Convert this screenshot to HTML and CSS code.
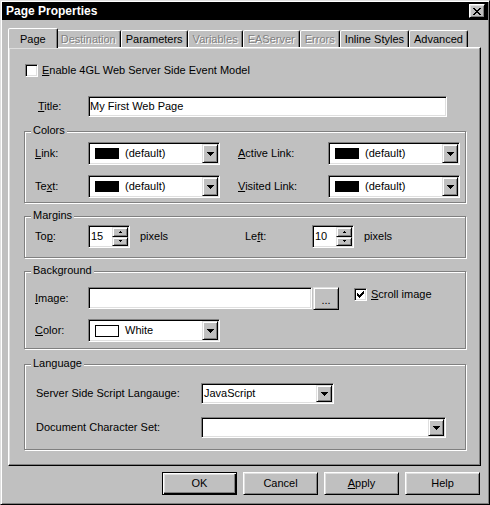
FILE: index.html
```html
<!DOCTYPE html>
<html>
<head>
<meta charset="utf-8">
<title>Page Properties</title>
<link rel="stylesheet" href="styles.css">
</head>
<body>
<div class="window">
  <div class="titlebar">
    <span class="title">Page Properties</span>
    <span class="close">
      <svg width="8" height="7" viewBox="0 0 8 7" shape-rendering="crispEdges"><path d="M0 0h2v1H0zM6 0h2v1H6zM1 1h2v1H1zM5 1h2v1H5zM2 2h4v1H2zM3 3h2v1H3zM2 4h4v1H2zM1 5h2v1H1zM5 5h2v1H5zM0 6h2v1H0zM6 6h2v1H6z" fill="#000"/></svg>
    </span>
  </div>
  <div class="body">
    <div class="tabs">
      <div class="tab sel">Page</div>
      <div class="tab dis">Destination</div>
      <div class="tab">Parameters</div>
      <div class="tab dis">Variables</div>
      <div class="tab dis">EAServer</div>
      <div class="tab dis">Errors</div>
      <div class="tab">Inline Styles</div>
      <div class="tab">Advanced</div>
    </div>
    <div class="panel">
      <div class="check-row">
        <span class="checkbox"></span>
        <span class="check-label"><u>E</u>nable 4GL Web Server Side Event Model</span>
      </div>
      <div class="title-row">
        <span class="lbl-title"><u>T</u>itle:</span>
        <div class="field title-field">My First Web Page</div>
      </div>

      <div class="group colors">
        <span class="legend">Colors</span>
        <div class="colors-grid">
          <span><u>L</u>ink:</span>
          <div class="combo c132"><div class="val"><span class="swatch"></span>(default)</div><span class="arrow"><svg width="7" height="4" viewBox="0 0 7 4" shape-rendering="crispEdges"><path d="M0 0h7v1H0zM1 1h5v1H1zM2 2h3v1H2zM3 3h1v1H3z"/></svg></span></div>
          <span><u>A</u>ctive Link:</span>
          <div class="combo c132"><div class="val"><span class="swatch"></span>(default)</div><span class="arrow"><svg width="7" height="4" viewBox="0 0 7 4" shape-rendering="crispEdges"><path d="M0 0h7v1H0zM1 1h5v1H1zM2 2h3v1H2zM3 3h1v1H3z"/></svg></span></div>
          <span>Te<u>x</u>t:</span>
          <div class="combo c132"><div class="val"><span class="swatch"></span>(default)</div><span class="arrow"><svg width="7" height="4" viewBox="0 0 7 4" shape-rendering="crispEdges"><path d="M0 0h7v1H0zM1 1h5v1H1zM2 2h3v1H2zM3 3h1v1H3z"/></svg></span></div>
          <span><u>V</u>isited Link:</span>
          <div class="combo c132"><div class="val"><span class="swatch"></span>(default)</div><span class="arrow"><svg width="7" height="4" viewBox="0 0 7 4" shape-rendering="crispEdges"><path d="M0 0h7v1H0zM1 1h5v1H1zM2 2h3v1H2zM3 3h1v1H3z"/></svg></span></div>
        </div>
      </div>

      <div class="group margins">
        <span class="legend">Margins</span>
        <div class="row">
          <span class="lbl53">To<u>p</u>:</span>
          <div class="spin"><span class="num">15</span><span class="spin-btns"><span class="sb"><svg width="3" height="2" viewBox="0 0 3 2" shape-rendering="crispEdges"><path d="M1 0h1v1H1zM0 1h3v1H0z"/></svg></span><span class="sb"><svg width="3" height="2" viewBox="0 0 3 2" shape-rendering="crispEdges"><path d="M0 0h3v1H0zM1 1h1v1H1z"/></svg></span></span></div>
          <span class="pixels first">pixels</span>
          <span class="lbl67">Le<u>f</u>t:</span>
          <div class="spin"><span class="num">10</span><span class="spin-btns"><span class="sb"><svg width="3" height="2" viewBox="0 0 3 2" shape-rendering="crispEdges"><path d="M1 0h1v1H1zM0 1h3v1H0z"/></svg></span><span class="sb"><svg width="3" height="2" viewBox="0 0 3 2" shape-rendering="crispEdges"><path d="M0 0h3v1H0zM1 1h1v1H1z"/></svg></span></span></div>
          <span class="pixels">pixels</span>
        </div>
      </div>

      <div class="group background">
        <span class="legend">Background</span>
        <div class="row img-row">
          <span class="lbl53"><u>I</u>mage:</span>
          <div class="field image-field"></div>
          <span class="btn-small">...</span>
          <span class="scroll-check">
            <span class="checkbox checked"><svg width="7" height="7" viewBox="0 0 7 7" shape-rendering="crispEdges"><path d="M6 0h1v1H6zM5 1h2v1H5zM0 2h1v1H0zM4 2h3v1H4zM0 3h2v1H0zM3 3h3v1H3zM0 4h5v1H0zM1 5h3v1H1zM2 6h1v1H2z"/></svg></span>
            <span class="check-label"><u>S</u>croll image</span>
          </span>
        </div>
        <div class="row color-row">
          <span class="lbl53"><u>C</u>olor:</span>
          <div class="combo c132"><div class="val"><span class="swatch white"></span>White</div><span class="arrow"><svg width="7" height="4" viewBox="0 0 7 4" shape-rendering="crispEdges"><path d="M0 0h7v1H0zM1 1h5v1H1zM2 2h3v1H2zM3 3h1v1H3z"/></svg></span></div>
        </div>
      </div>

      <div class="group language">
        <span class="legend">Language</span>
        <div class="row lang-row">
          <span class="lbl165">Server Side Script Langauge:</span>
          <div class="combo c133"><div class="val plain">JavaScript</div><span class="arrow"><svg width="7" height="4" viewBox="0 0 7 4" shape-rendering="crispEdges"><path d="M0 0h7v1H0zM1 1h5v1H1zM2 2h3v1H2zM3 3h1v1H3z"/></svg></span></div>
        </div>
        <div class="row lang-row second">
          <span class="lbl165">Document Character Set:</span>
          <div class="combo c245"><div class="val plain"></div><span class="arrow"><svg width="7" height="4" viewBox="0 0 7 4" shape-rendering="crispEdges"><path d="M0 0h7v1H0zM1 1h5v1H1zM2 2h3v1H2zM3 3h1v1H3z"/></svg></span></div>
        </div>
      </div>
    </div>
    <div class="buttons">
      <span class="btn default">OK</span>
      <span class="btn">Cancel</span>
      <span class="btn"><span><u>A</u>pply</span></span>
      <span class="btn">Help</span>
    </div>
  </div>
</div>
</body>
</html>
```

FILE: styles.css
```css
* { box-sizing: border-box; }
html, body { margin: 0; padding: 0; }
body {
  width: 490px;
  height: 505px;
  background: #c0c0c0;
  font-family: "Liberation Sans", Arial, sans-serif;
  font-size: 11px;
  line-height: 13px;
  color: #000;
}
u { text-decoration: underline; text-underline-offset: 1px; }

.window {
  width: 490px;
  height: 505px;
  background: #c0c0c0;
  border: 1px solid;
  border-color: #dfdfdf #000 #000 #dfdfdf;
  box-shadow: inset 1px 1px #fff, inset -1px -1px #808080;
  padding: 1px;
  display: flex;
  flex-direction: column;
}

.titlebar {
  height: 18px;
  background: #000;
  color: #fff;
  display: flex;
  align-items: center;
  justify-content: space-between;
  padding: 0 3px 0 4px;
}
.title { font-weight: bold; font-size: 12px; }
.close {
  width: 16px;
  height: 14px;
  background: #c0c0c0;
  border: 1px solid;
  border-color: #fff #000 #000 #fff;
  box-shadow: inset 1px 1px #dfdfdf, inset -1px -1px #808080;
  display: flex;
  align-items: center;
  justify-content: center;
}

.body { padding: 0 7px 0 6px; }

.tabs {
  display: flex;
  align-items: flex-end;
  height: 19px;
  margin-top: 8px;
  padding-left: 2px;
}
.tab {
  height: 17px;
  padding: 2px 4px 0;
  border: 1px solid;
  border-bottom: none;
  border-color: #fff #000 transparent #fff;
  box-shadow: inset -1px 0 #808080;
  border-radius: 2px 2px 0 0;
  white-space: nowrap;
  background: #c0c0c0;
}
.tab.sel {
  height: 20px;
  margin: 0 -2px -1px;
  padding: 4px 11px 0;
  position: relative;
  z-index: 1;
}
.tab.dis { color: #808080; text-shadow: 1px 1px #fff; }

.panel {
  height: 419px;
  border: 1px solid;
  border-color: #fff #000 #000 #fff;
  box-shadow: inset -1px -1px #808080, inset 1px 1px #dfdfdf;
}

.checkbox {
  display: inline-flex;
  align-items: center;
  justify-content: center;
  width: 13px;
  height: 13px;
  flex: none;
  background: #fff;
  border: 1px solid;
  border-color: #808080 #fff #fff #808080;
  box-shadow: inset 1px 1px #000, inset -1px -1px #dfdfdf;
}

.check-row {
  display: flex;
  align-items: center;
  height: 13px;
  margin: 16px 0 0 16px;
}
.check-label { margin-left: 4px; white-space: nowrap; }

.title-row {
  display: flex;
  align-items: center;
  margin: 19px 0 0 29px;
}
.lbl-title { width: 50px; }

.field {
  background: #fff;
  border: 1px solid;
  border-color: #808080 #fff #fff #808080;
  box-shadow: inset 1px 1px #000, inset -1px -1px #dfdfdf;
  padding: 0 1px 0 1px;
  display: flex;
  align-items: center;
}
.title-field { width: 359px; height: 21px; }

.group {
  position: relative;
  border: 1px solid #808080;
  box-shadow: inset 1px 1px #fff, 1px 1px #fff;
  margin-left: 15px;
  width: 442px;
}
.legend {
  position: absolute;
  left: 6px;
  top: -8px;
  padding: 0 2px;
  background: #c0c0c0;
  line-height: 13px;
}

.colors { margin-top: 14px; height: 72px; padding: 10px 0 0 10px; }
.colors-grid {
  display: grid;
  grid-template-columns: 53px 150px 90px 132px;
  grid-template-rows: 23px 23px;
  row-gap: 10px;
  align-items: center;
}

.combo {
  display: flex;
  height: 23px;
  background: #fff;
  border: 1px solid;
  border-color: #808080 #fff #fff #808080;
  box-shadow: inset 1px 1px #000, inset -1px -1px #dfdfdf;
  padding: 1px;
}
.c132 { width: 132px; }
.c133 { width: 133px; height: 21px; }
.c245 { width: 245px; height: 21px; }
.combo .val {
  flex: 1;
  display: flex;
  align-items: center;
  padding-left: 5px;
  white-space: nowrap;
}
.combo .val.plain { padding-left: 1px; }
.swatch {
  width: 24px;
  height: 11px;
  background: #000;
  margin-right: 6px;
}
.swatch.white { background: #fff; border: 1px solid #000; height: 12px; }

.arrow, .sb, .btn-small, .btn {
  background: #c0c0c0;
  border: 1px solid;
  border-color: #dfdfdf #000 #000 #dfdfdf;
  box-shadow: inset 1px 1px #fff, inset -1px -1px #808080;
}
.arrow {
  width: 16px;
  display: flex;
  align-items: center;
  justify-content: center;
  padding-top: 1px;
}

.row { display: flex; align-items: center; }
.lbl53 { width: 53px; flex: none; }
.lbl67 { width: 67px; flex: none; }
.lbl165 { width: 165px; flex: none; }

.margins { margin-top: 13px; height: 42px; padding: 8px 0 0 10px; }
.margins .row { height: 23px; }
.spin {
  display: flex;
  width: 42px;
  height: 23px;
  background: #fff;
  border: 1px solid;
  border-color: #808080 #fff #fff #808080;
  box-shadow: inset 1px 1px #000, inset -1px -1px #dfdfdf;
  padding: 1px;
}
.spin .num { flex: 1; padding-left: 1px; display: flex; align-items: center; }
.spin-btns { width: 16px; display: flex; flex-direction: column; }
.sb { flex: 1; display: flex; align-items: center; justify-content: center; }
.pixels { margin-left: 10px; }
.pixels.first { width: 105px; }

.background { margin-top: 13px; height: 78px; padding: 15px 0 0 10px; }
.img-row { height: 22px; }
.image-field { width: 224px; height: 22px; }
.btn-small {
  width: 26px;
  height: 23px;
  margin-left: 1px;
  display: flex;
  align-items: center;
  justify-content: center;
  padding-top: 4px;
}
.scroll-check {
  display: flex;
  align-items: center;
  margin-left: 15px;
  align-self: flex-start;
  margin-top: 1px;
}
.checkbox.checked { padding: 0; }
.color-row { height: 23px; margin-top: 10px; }

.language { margin-top: 15px; height: 86px; padding: 18px 0 0 11px; }
.lang-row { height: 21px; }
.lang-row.second { margin-top: 13px; }

.buttons {
  display: flex;
  justify-content: flex-end;
  gap: 6px;
  margin-top: 6px;
  padding-right: 1px;
}
.btn {
  width: 75px;
  height: 23px;
  display: flex;
  align-items: center;
  justify-content: center;
  border-color: #fff #000 #000 #fff;
  box-shadow: inset 1px 1px #dfdfdf, inset -1px -1px #808080;
}
.btn.default {
  border-color: #000;
  box-shadow: inset 1px 1px #fff, inset -1px -1px #000, inset -2px -2px #808080, inset 2px 2px #dfdfdf;
}
```
